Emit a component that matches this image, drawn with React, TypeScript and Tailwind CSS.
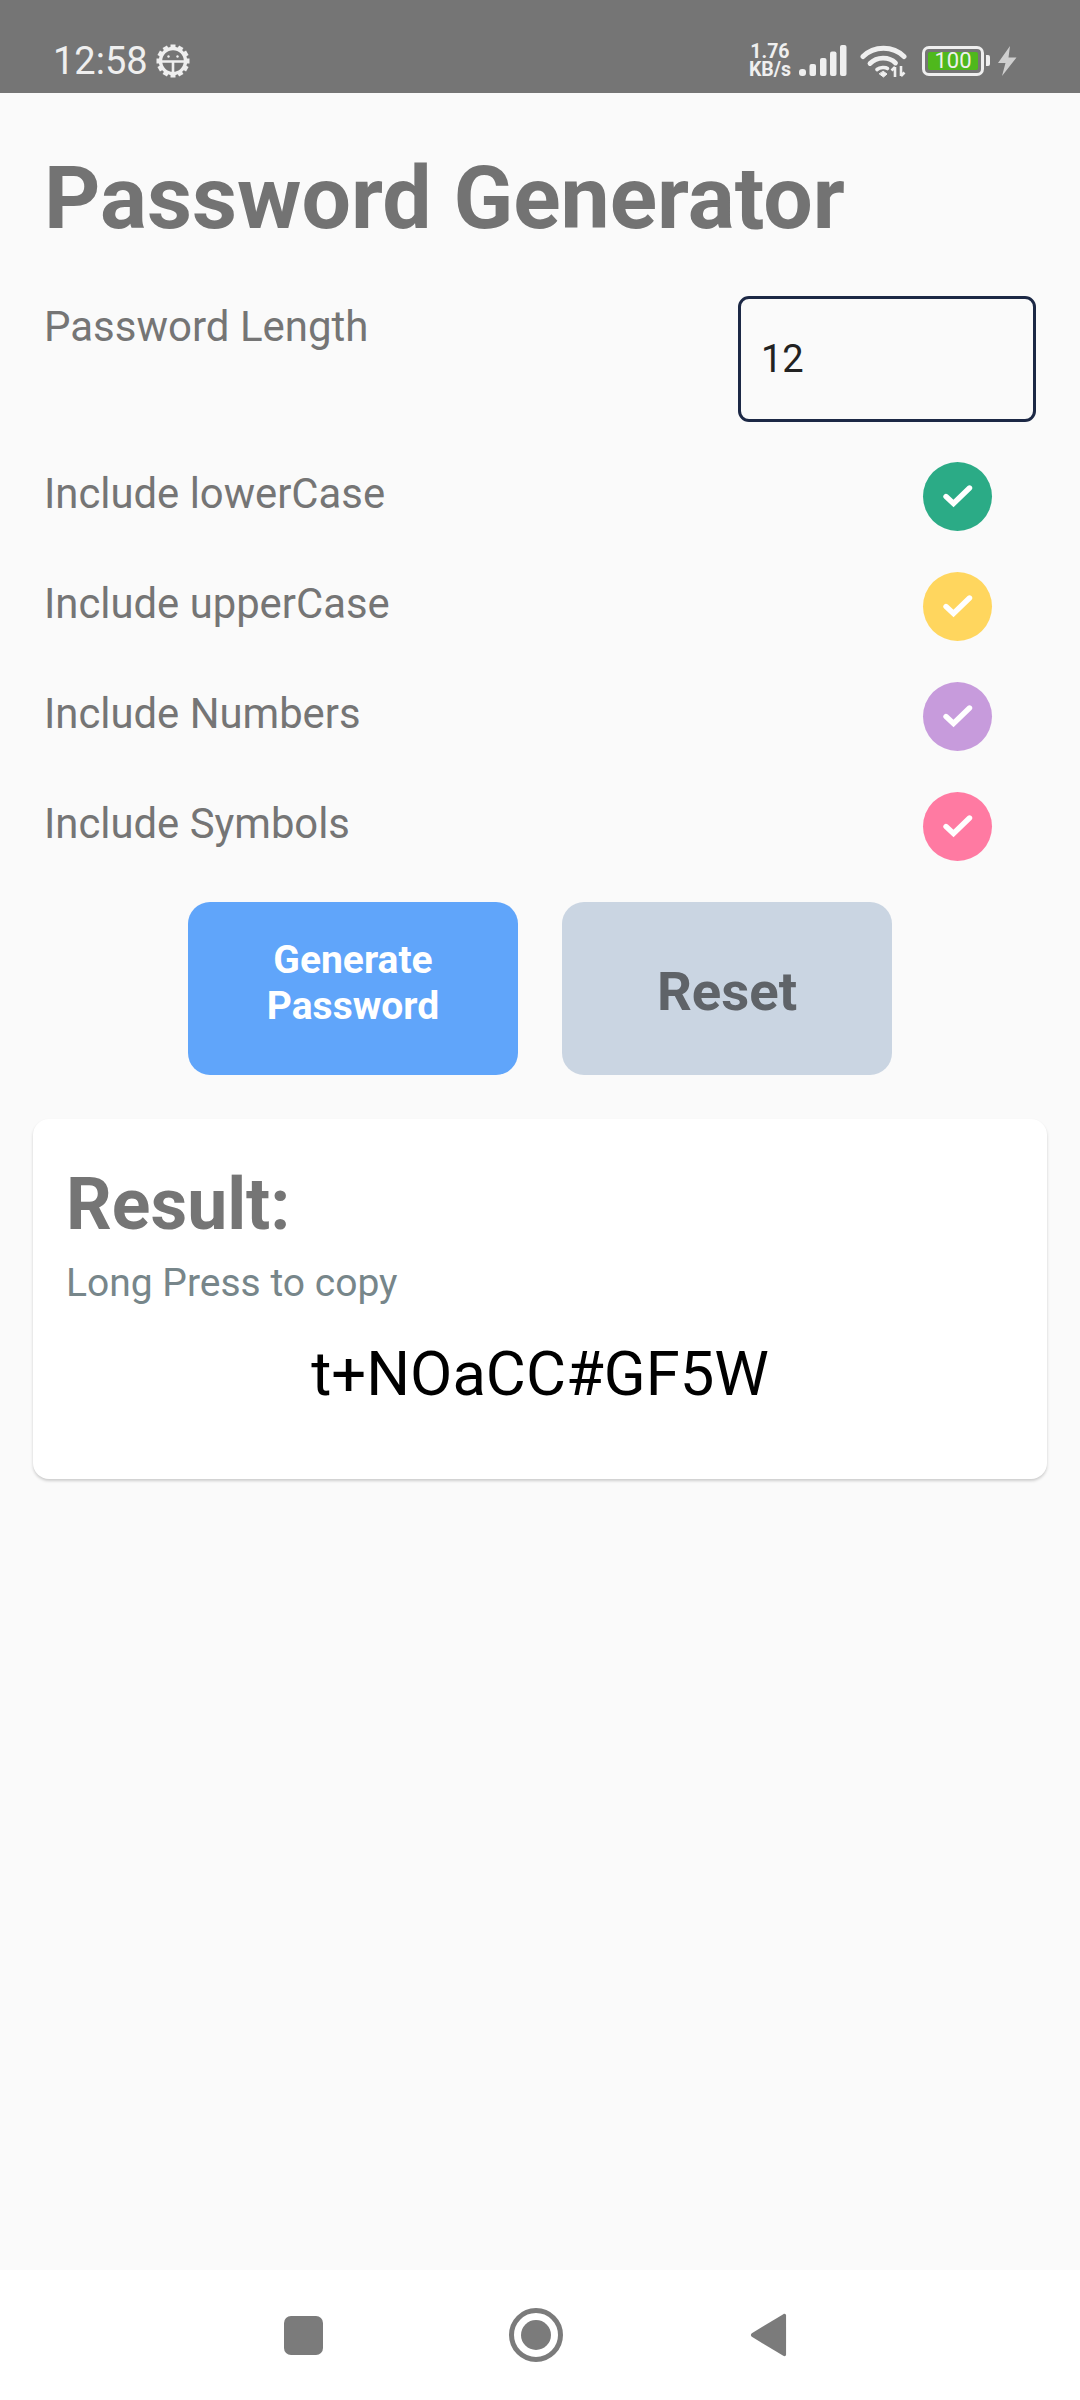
import React from "react";

const roboto = { fontFamily: "Roboto, sans-serif" };

function GearBug() {
  const teeth = Array.from({ length: 12 }, (_, i) => i * 30);
  return (
    <svg width="34" height="34" viewBox="0 0 34 34" fill="none" className="ml-[8px]">
      {teeth.map((a) => (
        <rect key={a} x="14.5" y="0.5" width="5" height="5" fill="#efefef" transform={`rotate(${a} 17 17)`} />
      ))}
      <circle cx="17" cy="17" r="12.5" stroke="#efefef" strokeWidth="3.4" />
      <path d="M5 17.5H29M17 17.5V28" stroke="#efefef" strokeWidth="2.6" />
      <circle cx="12.5" cy="12.5" r="1.2" fill="#efefef" />
      <circle cx="21.5" cy="12.5" r="1.2" fill="#efefef" />
    </svg>
  );
}

function Signal() {
  return (
    <svg width="48" height="32" viewBox="0 0 48 32" fill="#efefef">
      <rect x="0" y="24" width="7" height="7" rx="3" />
      <rect x="10.5" y="19" width="6.5" height="12" rx="2" />
      <rect x="21" y="13" width="6.5" height="18" rx="2" />
      <rect x="31" y="6.5" width="6.5" height="24.5" rx="2" />
      <rect x="41" y="0" width="6.5" height="31" rx="2" />
    </svg>
  );
}

function Wifi() {
  return (
    <svg width="48" height="34" viewBox="0 0 48 34" fill="none" stroke="#efefef" strokeLinecap="round">
      <path d="M3 12.5C14 1.5 33 1.5 44 12.5" strokeWidth="5" />
      <path d="M10 19.5C17 12.5 29 12.5 35.5 19" strokeWidth="4.8" />
      <path d="M17 25.5C20 23 25.5 23 27.5 24.5" strokeWidth="3.6" />
      <path d="M19.5 30L23.5 33L27 30L23.5 27.5Z" fill="#efefef" strokeWidth="1" />
      <path d="M35 23V33M31.5 26.5L35 23M41 22V32M41 32L44.5 28.5" strokeWidth="2.6" strokeLinecap="butt" />
    </svg>
  );
}

function Battery() {
  return (
    <div className="flex items-center">
      <div className="flex h-[30px] w-[62px] items-center rounded-[7px] border-[3px] border-[#efefef] p-[3px]">
        <div
          className="flex h-full w-full items-center justify-center rounded-[2px] bg-[#4fb81c] text-[22px] leading-none text-[#efefef]"
          style={roboto}
        >
          100
        </div>
      </div>
      <div className="ml-[2px] h-[11px] w-[4px] rounded-r-[2px] bg-[#efefef]" />
    </div>
  );
}

function Bolt() {
  return (
    <svg width="20" height="30" viewBox="0 0 20 30" fill="#cfcfcf" className="ml-[7px]">
      <path d="M13 0L1 17H8.5L5 30L19.5 11.5H11.5Z" />
    </svg>
  );
}

function StatusBar() {
  return (
    <div className="flex h-[93px] shrink-0 items-center justify-between bg-[#757575] pl-[53px] pr-[63px] pt-[28px]" style={roboto}>
      <div className="flex items-center">
        <span className="text-[38px] leading-none text-[#efefef]">12:58</span>
        <GearBug />
      </div>
      <div className="flex items-center">
        <div className="mr-[8px] flex flex-col items-center text-[19.5px] font-bold leading-[18px] text-[#efefef]">
          <span>1.76</span>
          <span>KB/s</span>
        </div>
        <Signal />
        <div className="ml-[13px] mr-[14px]">
          <Wifi />
        </div>
        <Battery />
        <Bolt />
      </div>
    </div>
  );
}

function Check({ color }: { color: string }) {
  return (
    <div className={`flex h-[69px] w-[69px] items-center justify-center rounded-full ${color}`}>
      <svg width="30" height="24" viewBox="0 0 30 24" fill="none" stroke="white" strokeWidth="5.4" strokeLinecap="round" strokeLinejoin="miter">
        <path d="M3 12.5L10.5 19.5L26.5 4" />
      </svg>
    </div>
  );
}

function OptionRow({ label, color }: { label: string; color: string }) {
  return (
    <div className="flex h-[110px] items-center justify-between pl-[44px] pr-[88px]">
      <span className="-mt-[4px] text-[41.8px] leading-none text-[#757575]">{label}</span>
      <Check color={color} />
    </div>
  );
}

function NavBar() {
  return (
    <div className="flex h-[130px] shrink-0 items-center justify-center bg-white pr-[9px]">
      <div className="h-[39px] w-[39px] rounded-[7px] bg-[#7b7b7b]" />
      <div className="ml-[186px] flex h-[54px] w-[54px] items-center justify-center rounded-full border-[5px] border-[#7b7b7b]">
        <div className="h-[30px] w-[30px] rounded-full bg-[#7b7b7b]" />
      </div>
      <svg width="37" height="46" viewBox="0 0 40 48" fill="#7b7b7b" className="ml-[187px]">
        <path d="M36 1.5C37.5 .6 39 1.5 39 3V45C39 46.5 37.5 47.4 36 46.5L2 26C.6 25 .6 23 2 22Z" />
      </svg>
    </div>
  );
}

export default function App() {
  return (
    <div className="flex h-[2400px] w-[1080px] flex-col bg-[#fafafa]" style={roboto}>
      <StatusBar />
      <main className="flex-1">
        <h1 className="pl-[44px] pt-[65px] text-[87.7px] font-bold leading-[81px] text-[#737373]">Password Generator</h1>

        <div className="mt-[57px] flex items-start justify-between pl-[44px] pr-[44px]">
          <span className="mt-[7px] text-[42px] leading-[48px] text-[#757575]">Password Length</span>
          <div className="flex h-[126px] w-[298px] items-center rounded-[11px] border-[3px] border-[#1c2845] pl-[20px] text-[38px] text-[#222222]">
            12
          </div>
        </div>

        <div className="mt-[19px]">
          <OptionRow label="Include lowerCase" color="bg-[#2bab86]" />
          <OptionRow label="Include upperCase" color="bg-[#ffd65e]" />
          <OptionRow label="Include Numbers" color="bg-[#c79bdc]" />
          <OptionRow label="Include Symbols" color="bg-[#ff7aa2]" />
        </div>

        <div className="mt-[21px] flex justify-center gap-[44px]">
          <div className="flex h-[173px] w-[330px] items-center justify-center rounded-[22px] bg-[#60a5fa] pb-[12px] text-center text-[39px] font-bold leading-[46px] text-white">
            Generate
            <br />
            Password
          </div>
          <div className="flex h-[173px] w-[330px] items-center justify-center rounded-[22px] bg-[#cad5e2] pt-[6px] text-[54.5px] font-bold text-[#5f6368]">
            Reset
          </div>
        </div>

        <section className="mx-[33px] mt-[44px] h-[360px] rounded-[16px] bg-white pl-[33px] pt-[46px] shadow-[0_2px_3px_rgba(0,0,0,0.18)]">
          <h2 className="text-[71.5px] font-bold leading-[80px] text-[#757575]">Result:</h2>
          <p className="mt-[16px] text-[39px] leading-[44px] text-[#77868a]">Long Press to copy</p>
          <p className="mt-[36px] pr-[33px] text-center text-[61.5px] leading-[66px] text-black">t+NOaCC#GF5W</p>
        </section>
      </main>
      <NavBar />
    </div>
  );
}
